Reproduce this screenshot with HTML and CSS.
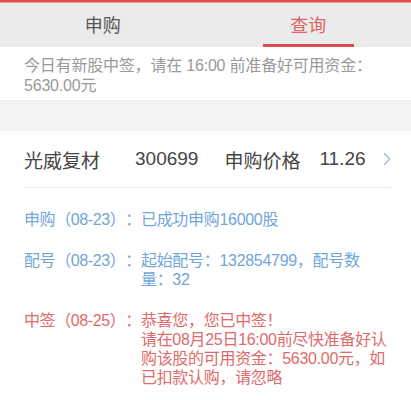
FILE: index.html
```html
<!DOCTYPE html>
<html lang="zh-CN">
<head>
<meta charset="utf-8">
<link rel="stylesheet" href="styles.css">
</head>
<body>
<div class="topbar"></div>
<div class="tabs">
  <div class="tab"><span class="tab-label">申购</span><span class="tab-line"></span></div>
  <div class="tab tab-active"><span class="tab-label">查询</span><span class="tab-line"></span></div>
</div>
<div class="notice">今日有新股中签，请在 16:00 前准备好可用资金：5630.00元</div>
<div class="gap"></div>
<div class="card">
  <div class="stock-row">
    <span class="stock-name">光威复材</span>
    <span class="stock-code">300699</span>
    <span class="stock-label">申购价格</span>
    <span class="stock-price">11.26</span>
    <svg class="chevron" width="8" height="14" viewBox="0 0 8 14"><polyline points="1.5,1.5 6.5,7 1.5,12.5" fill="none" stroke="#a9bdd1" stroke-width="1.4" stroke-linecap="round" stroke-linejoin="round"/></svg>
  </div>
  <div class="details">
    <div class="item item-blue">
      <span class="item-label">申购（08-23）：</span>
      <span class="item-text">已成功申购16000股</span>
    </div>
    <div class="item item-blue">
      <span class="item-label">配号（08-23）：</span>
      <span class="item-text">起始配号：132854799，配号数<br>量：32</span>
    </div>
    <div class="item item-red">
      <span class="item-label">中签（08-25）：</span>
      <span class="item-text">恭喜您，您已中签！<br>请在08月25日16:00前尽快准备好认<br>购该股的可用资金：5630.00元，如<br>已扣款认购，请忽略</span>
    </div>
  </div>
</div>
</body>
</html>
```
FILE: styles.css
```css
* { box-sizing: border-box; }
html, body {
  margin: 0;
  padding: 0;
  background: #ffffff;
  font-family: "Liberation Sans", "Noto Sans CJK TC", sans-serif;
  text-spacing-trim: space-all;
}
.topbar {
  height: 3px;
  background: #dc4b4b;
  border-bottom: 1px solid #e9a0a0;
}
.tabs {
  display: flex;
  height: 44px;
  background: #ebebeb;
}
.tab {
  flex: 1;
  display: flex;
  flex-direction: column;
  align-items: center;
}
.tab-label {
  flex: 1;
  display: flex;
  align-items: center;
  font-size: 18px;
  color: #555555;
  padding-top: 1px;
}
.tab-line {
  width: 91px;
  height: 3px;
  background: transparent;
}
.tab-active .tab-label { color: #e26464; }
.tab-active .tab-line { background: #d9504f; }
.notice {
  padding: 9px 24px 4px;
  font-size: 16px;
  line-height: 20px;
  color: #9a9a9a;
  letter-spacing: -0.2px;
  border-bottom: 1px solid #f0f0f0;
}
.gap {
  height: 30px;
  background: #f3f3f3;
}
.card {
  padding: 0 20px 0 24px;
}
.stock-row {
  display: flex;
  align-items: center;
  height: 57px;
  border-bottom: 1px solid #e8e8e8;
  font-size: 19px;
  color: #444444;
}
.stock-code { margin-left: 35px; }
.stock-label { margin-left: 26px; }
.stock-price { margin-left: 19px; }
.chevron { margin-left: auto; }
.details {
  display: flex;
  flex-direction: column;
  gap: 22px;
  padding-top: 22px;
}
.item {
  display: flex;
  font-size: 16px;
  line-height: 19px;
  white-space: nowrap;
}
.item-label { flex-shrink: 0; letter-spacing: -0.4px; }
.item-text { letter-spacing: -0.3px; }
.item-blue { color: #72a5d8; }
.item-red { color: #e06a6a; }
```
